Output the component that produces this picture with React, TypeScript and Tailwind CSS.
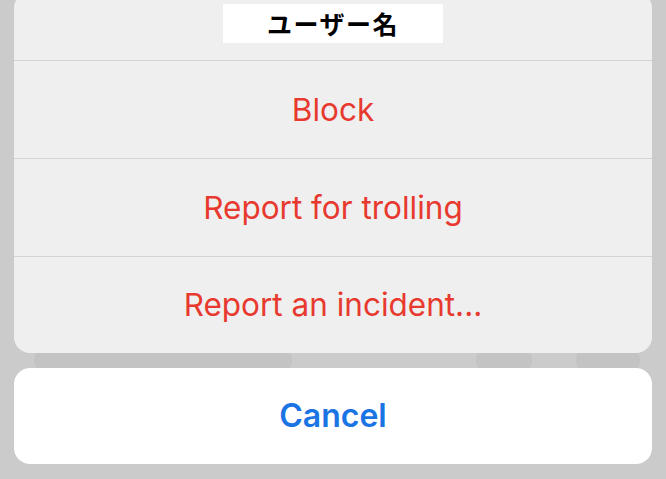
export default function App() {
  const actions = ["Block", "Report for trolling", "Report an incident..."];

  return (
    <div className="relative flex h-[479px] w-[666px] flex-col overflow-hidden bg-[#cbcbcb] px-[14px] font-['Inter','Noto_Sans',sans-serif]">
      {/* blurred shapes behind the sheet */}
      <div className="absolute top-[345px] left-[34px] h-[30px] w-[258px] rounded-full bg-[#c3c3c3]" />
      <div className="absolute top-[345px] left-[476px] h-[30px] w-[56px] rounded-full bg-[#c3c3c3]" />
      <div className="absolute top-[345px] left-[576px] h-[30px] w-[64px] rounded-full bg-[#c3c3c3]" />

      {/* action group */}
      <div className="relative -mt-[8px] overflow-hidden rounded-[16px] bg-[#efefef]">
        <div className="flex h-[68px] justify-center pt-[12px]">
          <div className="flex h-[39px] w-[220px] items-center justify-center bg-white">
            <span className="font-['Noto_Sans_CJK_JP',sans-serif] text-[25px] leading-none font-bold tracking-[1.5px] text-black">
              ユーザー名
            </span>
          </div>
        </div>
        {actions.map((label, i) => (
          <div
            key={label}
            className={`flex items-center justify-center border-t border-[#d3d3d3] ${
              i === actions.length - 1 ? "h-[97px]" : "h-[98px]"
            }`}
          >
            <span className="text-[31.5px] text-[#e8392f]">{label}</span>
          </div>
        ))}
      </div>

      {/* cancel button */}
      <div className="relative mt-[15px] flex h-[96px] items-center justify-center rounded-[16px] bg-white">
        <span className="text-[32px] font-semibold text-[#1b74e4]">Cancel</span>
      </div>
    </div>
  );
}
